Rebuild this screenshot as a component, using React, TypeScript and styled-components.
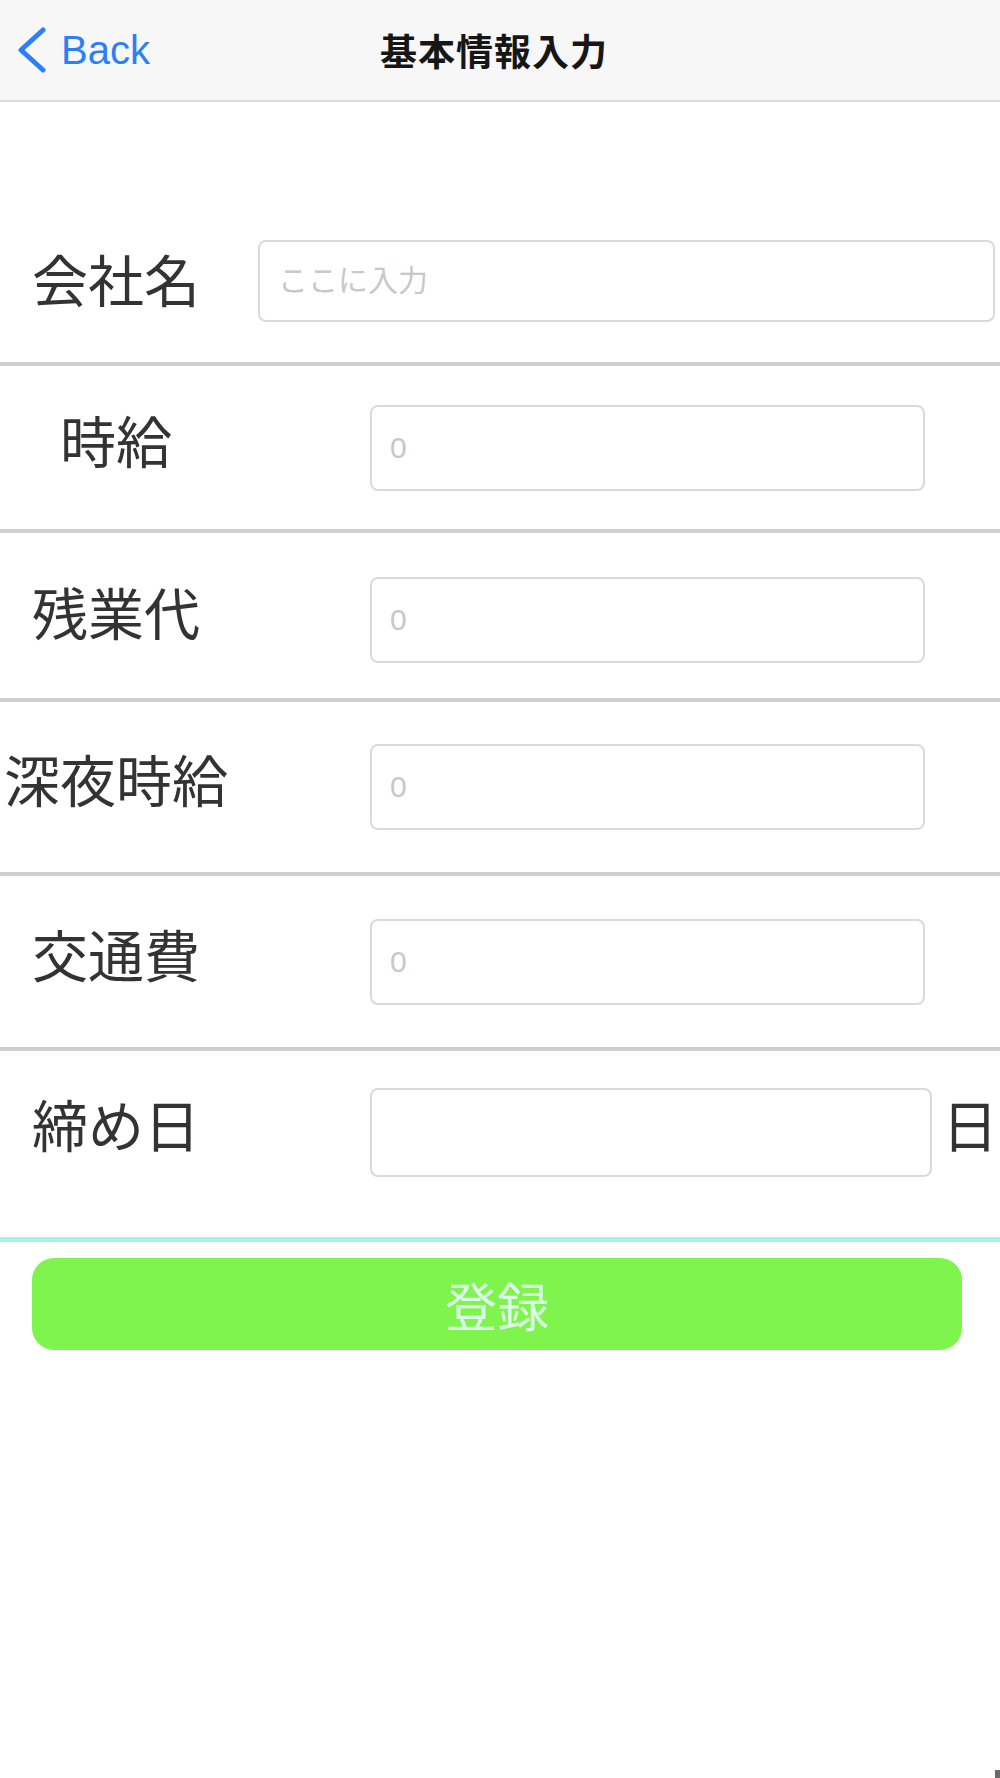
import styled, { createGlobalStyle } from "styled-components";

const GlobalStyle = createGlobalStyle`
  body {
    margin: 0;
    background: #ffffff;
    font-family: "Noto Sans CJK JP", "Liberation Sans", sans-serif;
  }
`;

const Page = styled.div`
  width: 1000px;
  min-height: 1778px;
  background: #ffffff;
`;

const NavBar = styled.header`
  height: 100px;
  background: #f7f7f7;
  border-bottom: 2px solid #dcdcdc;
  display: grid;
  grid-template-columns: 1fr auto 1fr;
  align-items: center;
`;

const BackButton = styled.div`
  display: flex;
  align-items: center;
  gap: 15px;
  padding-left: 16px;
  color: #2c80f7;
  font-family: "Liberation Sans", sans-serif;
  font-size: 40px;
  cursor: pointer;

  svg {
    display: block;
  }
`;

const Title = styled.h1`
  margin: 0 12px 0 0;
  font-family: "Noto Sans CJK JP", sans-serif;
  font-size: 37px;
  font-weight: 700;
  color: #161616;
  letter-spacing: 1px;
`;

const Row = styled.div<{ $h: number; $pt?: number; $pb?: number; $teal?: boolean }>`
  box-sizing: border-box;
  height: ${(p) => p.$h}px;
  padding-top: ${(p) => p.$pt ?? 0}px;
  padding-bottom: ${(p) => p.$pb ?? 0}px;
  display: flex;
  align-items: center;
  border-bottom: ${(p) => (p.$teal ? "5px solid #a3f6de" : "4px solid #cfcfcf")};
`;

const Label = styled.span<{ $lift?: number }>`
  width: 232px;
  flex-shrink: 0;
  margin-bottom: ${(p) => p.$lift ?? 18}px;
  text-align: center;
  white-space: nowrap;
  font-size: 56px;
  font-weight: 400;
  color: #333333;
  line-height: 1;
`;

const Field = styled.input<{ $ml: number; $w?: number; $h: number }>`
  box-sizing: border-box;
  margin-left: ${(p) => p.$ml}px;
  ${(p) => (p.$w ? `width: ${p.$w}px;` : "flex: 1; margin-right: 5px;")}
  height: ${(p) => p.$h}px;
  border: 2px solid #dadada;
  border-radius: 8px;
  background: #ffffff;
  padding: 0 18px;
  font-family: "Liberation Sans", "Noto Sans CJK JP", sans-serif;
  font-size: 30px;
  color: #333333;
  outline: none;

  &::placeholder {
    color: #c8c8c8;
  }
`;

const Suffix = styled.span`
  margin-left: 10px;
  margin-bottom: 18px;
  font-size: 56px;
  color: #333333;
  line-height: 1;
`;

const SubmitButton = styled.button`
  display: block;
  box-sizing: border-box;
  width: 930px;
  height: 92px;
  margin: 16px 0 0 32px;
  border: none;
  border-radius: 22px;
  background: #7ef44d;
  color: #dcfce9;
  font-family: "Noto Sans CJK JP", sans-serif;
  font-size: 52px;
  cursor: pointer;
`;

const ScrollMark = styled.div`
  position: fixed;
  right: 0;
  bottom: 0;
  width: 5px;
  height: 8px;
  background: #6a6a6a;
`;

const Chevron = () => (
  <svg width="30" height="46" viewBox="0 0 30 46">
    <polyline
      points="27,3 5,23 27,43"
      fill="none"
      stroke="#2c80f7"
      strokeWidth="5"
      strokeLinecap="round"
      strokeLinejoin="round"
    />
  </svg>
);

const rows = [
  { label: "時給", h: 167 },
  { label: "残業代", h: 169, pt: 8 },
  { label: "深夜時給", h: 174 },
  { label: "交通費", h: 175 },
];

const App = () => {
  return (
    <>
      <GlobalStyle />
      <Page>
        <NavBar>
          <BackButton>
            <Chevron />
            <span>Back</span>
          </BackButton>
          <Title>基本情報入力</Title>
          <div />
        </NavBar>

        <Row $h={264} $pt={138} $pb={40}>
          <Label $lift={6}>会社名</Label>
          <Field $ml={26} $h={82} placeholder="ここに入力" />
        </Row>

        {rows.map((r) => (
          <Row key={r.label} $h={r.h} $pt={r.pt}>
            <Label>{r.label}</Label>
            <Field $ml={138} $w={555} $h={86} placeholder="0" />
          </Row>
        ))}

        <Row $h={191} $pb={24} $teal>
          <Label>締め日</Label>
          <Field $ml={138} $w={562} $h={89} />
          <Suffix>日</Suffix>
        </Row>

        <SubmitButton>登録</SubmitButton>
      </Page>
      <ScrollMark />
    </>
  );
};

export default App;
